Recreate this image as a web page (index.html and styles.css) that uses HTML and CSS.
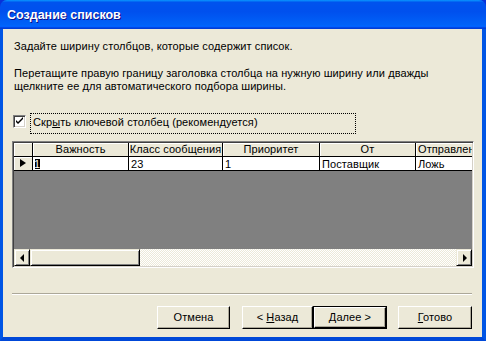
FILE: index.html
```html
<!DOCTYPE html>
<html lang="ru">
<head>
<meta charset="utf-8">
<title>Создание списков</title>
<link rel="stylesheet" href="styles.css">
</head>
<body>
<div class="window">
  <div class="titlebar"><span class="title">Создание списков</span></div>
  <div class="frame">
    <p class="txt first">Задайте ширину столбцов, которые содержит список.</p>
    <p class="txt second">Перетащите правую границу заголовка столбца на нужную ширину или дважды<br>щелкните ее для автоматического подбора ширины.</p>
    <div class="checkrow">
      <span class="checkbox">
        <svg width="13" height="13" viewBox="0 0 13 13"><path d="M3 5v2l2 2l5-5v-2l-5 5z" fill="#000"/><path d="M3 6l2 2l5-5" stroke="#000" stroke-width="1" fill="none"/></svg>
      </span>
      <span class="focus">Скр<u>ы</u>ть ключевой столбец (рекомендуется)</span>
    </div>
    <div class="grid">
      <div class="table">
        <div class="row head">
          <div class="cell sel"></div>
          <div class="cell c1">Важность</div>
          <div class="cell c2">Класс сообщения</div>
          <div class="cell c3">Приоритет</div>
          <div class="cell c4">От</div>
          <div class="cell c5">Отправлен</div>
        </div>
        <div class="row data">
          <div class="cell sel"><span class="arrow"></span></div>
          <div class="cell c1"><span class="hl">1</span></div>
          <div class="cell c2">23</div>
          <div class="cell c3">1</div>
          <div class="cell c4">Поставщик</div>
          <div class="cell c5">Ложь</div>
        </div>
      </div>
      <div class="hscroll">
        <div class="sbtn"><span class="tri left"></span></div>
        <div class="thumb"></div>
        <div class="track"></div>
        <div class="sbtn"><span class="tri right"></span></div>
      </div>
    </div>
    <div class="separator"></div>
    <div class="buttons">
      <div class="btn cancel"><span>Отмена</span></div>
      <div class="btn back"><span>&lt; <u>Н</u>азад</span></div>
      <div class="btn next default"><span class="inner"><span><u>Д</u>алее &gt;</span></span></div>
      <div class="btn finish"><span><u>Г</u>отово</span></div>
    </div>
  </div>
</div>
</body>
</html>
```

FILE: styles.css
```css
* { box-sizing: border-box; }
html, body { margin: 0; padding: 0; background: #fff; }
body {
  font-family: "Liberation Sans", Arial, sans-serif;
  font-size: 11px;
  letter-spacing: 0.08px;
  color: #000;
}
.window {
  width: 486px;
  height: 341px;
  display: flex;
  flex-direction: column;
  background: #0831d9;
}
.titlebar {
  height: 29px;
  border-radius: 7px 7px 0 0;
  background: linear-gradient(180deg, #0997ff 0, #0053ee 8%, #0050ee 40%, #0062f8 85%, #0066ff 90%, #005bff 93%, #003dd7 96%, #003dd7 100%);
  padding-left: 7px;
  display: flex;
  align-items: center;
  flex: none;
}
.title {
  color: #fff;
  font-weight: bold;
  font-size: 12.5px;
  letter-spacing: 0;
  text-shadow: 1px 1px #0f1089;
  margin-top: 1px;
}
.frame {
  flex: 1;
  background: #ece9d8;
  border-left: 3px solid #0055e5;
  border-right: 4px solid #0055e5;
  border-bottom: 4px solid #0048d8;
  padding: 11px 8px 0 9px;
  display: flex;
  flex-direction: column;
}
.txt {
  margin: 0;
  padding-left: 2px;
  line-height: 13px;
}
.second { margin-top: 14px; }
.checkrow {
  margin-top: 20px;
  height: 21px;
  display: flex;
  align-items: flex-start;
  padding-left: 1px;
}
.checkbox {
  width: 13px;
  height: 13px;
  margin-top: 2px;
  background: #fff;
  border: 1px solid;
  border-color: #808080 #fff #fff #808080;
  box-shadow: inset 1px 1px #404040, inset -1px -1px #d4d0c8;
  display: flex;
}
.checkbox svg { display: block; margin: -1px; }
.focus {
  margin-left: 4px;
  width: 326px;
  height: 21px;
  border: 1px dotted #000;
  padding: 2px 0 0 2px;
  line-height: 13px;
}
.grid {
  margin-top: 7px;
  width: 462px;
  height: 127px;
  border: 1px solid;
  border-color: #808080 #fff #fff #808080;
  box-shadow: inset 1px 1px #404040, inset -1px -1px #d4d0c8;
  padding: 1px;
  display: flex;
  flex-direction: column;
}
.table {
  flex: 1;
  background: #808080;
  overflow: hidden;
}
.row {
  display: flex;
  height: 14px;
  white-space: nowrap;
}
.cell {
  flex: none;
  height: 14px;
  line-height: 13px;
  border-right: 1px solid #000;
  border-bottom: 1px solid #000;
  overflow: hidden;
}
.head .cell {
  background: #ece9d8;
  text-align: center;
  box-shadow: inset 1px 1px #fff;
}
.data .cell {
  background: #fff;
  padding-left: 2px;
  line-height: 14px;
}
.data .cell.sel {
  background: #ece9d8;
  box-shadow: inset 1px 1px #fff;
  padding: 0;
}
.sel { width: 19px; }
.c1 { width: 96px; }
.c2 { width: 94px; }
.c3 { width: 97px; }
.c4 { width: 96px; }
.c5 { width: 80px; }
.head .c5 { text-align: left; padding-left: 2px; }
.arrow {
  display: block;
  width: 0;
  height: 0;
  margin: 2px 0 0 6px;
  border-top: 4.5px solid transparent;
  border-bottom: 4.5px solid transparent;
  border-left: 6px solid #000;
}
.hl {
  display: inline-block;
  background: #000;
  color: #fff;
  width: 5px;
  height: 10px;
  line-height: 11px;
  text-align: center;
  margin-top: 2px;
  vertical-align: top;
  text-indent: -1px;
}
.hscroll {
  height: 17px;
  display: flex;
  flex: none;
}
.sbtn, .thumb {
  background: #ece9d8;
  border: 1px solid;
  border-color: #ece9d8 #000 #000 #ece9d8;
  box-shadow: inset 1px 1px #fff, inset -1px -1px #808080;
}
.sbtn {
  width: 16px;
  display: flex;
  align-items: center;
  justify-content: center;
}
.thumb { width: 110px; }
.track {
  flex: 1;
  background: repeating-conic-gradient(#fff 0 25%, #ece9d8 0 50%) 0 0 / 2px 2px;
}
.tri {
  width: 0;
  height: 0;
  border-top: 4px solid transparent;
  border-bottom: 4px solid transparent;
}
.tri.left { border-right: 4px solid #000; margin-left: -1px; }
.tri.right { border-left: 4px solid #000; margin-left: 1px; }
.separator {
  margin-top: 25px;
  width: 460px;
  height: 2px;
  border-top: 1px solid #aca899;
  border-bottom: 1px solid #fff;
}
.buttons {
  margin-top: 11px;
  width: 460px;
  display: flex;
  justify-content: flex-end;
}
.btn {
  height: 23px;
  background: #ece9d8;
  border: 1px solid;
  border-color: #fff #000 #000 #fff;
  box-shadow: inset -1px -1px #aca899;
  display: flex;
  align-items: center;
  justify-content: center;
  line-height: 13px;
  white-space: pre;
}
.cancel { width: 73px; margin-right: 12px; }
.back { width: 71px; }
.next { width: 74px; margin-right: 11px; }
.finish { width: 74px; }
.btn.default {
  border: 1px solid #000;
  box-shadow: none;
  padding: 0;
}
.btn.default .inner {
  width: 100%;
  height: 100%;
  border: 1px solid;
  border-color: #fff #000 #000 #fff;
  box-shadow: inset -1px -1px #aca899;
  display: flex;
  align-items: center;
  justify-content: center;
}
u { text-decoration: underline; text-underline-offset: 1px; }
```
